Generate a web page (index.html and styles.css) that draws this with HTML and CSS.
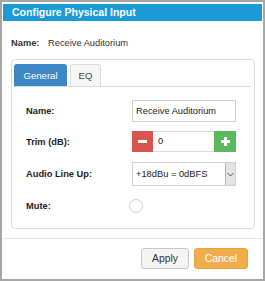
FILE: index.html
```html
<!DOCTYPE html>
<html lang="en">
<head>
  <meta charset="UTF-8">
  <title>Configure Physical Input</title>
  <link rel="stylesheet" href="styles.css">
</head>
<body>

  <div class="modal">
    <div class="modal-header">Configure Physical Input</div>

    <div class="name-row">
      <span class="name-label">Name:</span>
      <span class="name-value">Receive Auditorium</span>
    </div>

    <div class="panel">
      <div class="tabs">
        <div class="tab active">General</div>
        <div class="tab">EQ</div>
      </div>

      <div class="form">
        <div class="form-row row-name">
          <label>Name:</label>
          <div class="text-input">Receive Auditorium</div>
        </div>

        <div class="form-row row-trim">
          <label>Trim (dB):</label>
          <div class="spinner">
            <div class="spin-btn minus">
              <svg width="9" height="9" viewBox="0 0 9 9"><rect x="0" y="3" width="9" height="3" fill="#fff"/></svg>
            </div>
            <div class="spin-value">0</div>
            <div class="spin-btn plus">
              <svg width="9" height="9" viewBox="0 0 9 9"><rect x="0" y="3" width="9" height="3" fill="#fff"/><rect x="3" y="0" width="3" height="9" fill="#fff"/></svg>
            </div>
          </div>
        </div>

        <div class="form-row row-select">
          <label>Audio Line Up:</label>
          <div class="select">
            <span class="select-text">+18dBu = 0dBFS</span>
            <span class="select-arrow">
              <svg width="7" height="5" viewBox="0 0 7 5"><path d="M0.5 1 L3.5 4 L6.5 1" fill="none" stroke="#555" stroke-width="1"/></svg>
            </span>
          </div>
        </div>

        <div class="form-row row-mute">
          <label>Mute:</label>
          <span class="radio"></span>
        </div>
      </div>
    </div>

    <div class="modal-footer">
      <button class="btn btn-apply">Apply</button>
      <button class="btn btn-cancel">Cancel</button>
    </div>
  </div>

</body>
</html>
```

FILE: styles.css
```css
body {
  margin: 0;
  font-family: 'Liberation Sans', Arial, sans-serif;
  color: #333;
  background-color: white;
}

.modal {
  width: 265px;
  height: 281px;
  box-sizing: border-box;
  border: 2px solid #a6a6a6;
  padding: 2px 1px 0;
}

.modal-header {
  height: 17px;
  line-height: 17px;
  background-color: #1b9ad6;
  color: white;
  font-size: 10.5px;
  font-weight: bold;
  padding-left: 9px;
}

.name-row {
  display: flex;
  margin: 16px 0 0 8px;
  height: 12px;
  line-height: 12px;
  font-size: 9.3px;
}

.name-label {
  font-weight: bold;
  width: 37px;
}

.panel {
  margin: 10px 0 0 8px;
  width: 244px;
  height: 170px;
  box-sizing: border-box;
  border: 1px solid #dcdcdc;
  border-radius: 4px;
}

.tabs {
  display: flex;
  gap: 3px;
  margin: 4px 3px 0 2px;
  border-bottom: 1px solid #dcdcdc;
}

.tab {
  height: 22px;
  line-height: 22px;
  box-sizing: border-box;
  font-size: 9.6px;
  text-align: center;
  border: 1px solid #dcdcdc;
  border-bottom: none;
  border-radius: 3px 3px 0 0;
  background-color: #f6f6f6;
  color: #444;
  width: 31px;
}

.tab.active {
  width: 53px;
  background-color: #3d87c7;
  border-color: #3d87c7;
  color: white;
}

.form {
  padding: 13px 0 0 14px;
}

.form-row {
  display: flex;
  align-items: center;
  font-size: 9.3px;
}

.form-row label {
  font-weight: bold;
  color: #222;
  width: 106px;
}

.row-name {
  height: 22px;
  margin-bottom: 9px;
}

.row-trim {
  height: 21px;
  margin-bottom: 10px;
}

.row-select {
  height: 24px;
  margin-bottom: 13px;
}

.row-mute {
  height: 14px;
}

.text-input {
  width: 104px;
  height: 22px;
  line-height: 20px;
  box-sizing: border-box;
  border: 1px solid #cfcfcf;
  padding-left: 3px;
  color: #222;
}

.spinner {
  display: flex;
  width: 104px;
  height: 21px;
}

.spin-btn {
  width: 21px;
  display: flex;
  align-items: center;
  justify-content: center;
}

.spin-btn.minus {
  background-color: #d9534f;
}

.spin-btn.plus {
  background-color: #5cb85c;
  width: 22px;
}

.spin-value {
  flex: 1;
  box-sizing: border-box;
  border: 1px solid #dcdcdc;
  border-left: none;
  border-right: none;
  padding-left: 5px;
  line-height: 19px;
  color: #222;
}

.select {
  display: flex;
  width: 104px;
  height: 24px;
  box-sizing: border-box;
  border: 1px solid #cfcfcf;
}

.select-text {
  flex: 1;
  line-height: 22px;
  padding-left: 3px;
  color: #222;
}

.select-arrow {
  width: 9px;
  background-color: #e3e3e3;
  border-left: 1px solid #b5b5b5;
  display: flex;
  align-items: center;
  justify-content: center;
}

.radio {
  width: 14px;
  height: 14px;
  box-sizing: border-box;
  border: 1px solid #cfcfcf;
  border-radius: 50%;
  margin-left: -3px;
}

.modal-footer {
  margin-top: 9px;
  border-top: 1px solid #e5e5e5;
  padding: 9px 14px 0 0;
  display: flex;
  justify-content: flex-end;
  gap: 5px;
}

.btn {
  height: 21px;
  font-family: 'Liberation Sans', Arial, sans-serif;
  font-size: 10.4px;
  border-radius: 3px;
  padding: 0;
  cursor: pointer;
}

.btn-apply {
  width: 48px;
  background-color: #f4f4f4;
  border: 1px solid #c8c8c8;
  color: #333;
}

.btn-cancel {
  width: 54px;
  background-color: #f0ad4e;
  border: 1px solid #eea236;
  color: white;
}
```
